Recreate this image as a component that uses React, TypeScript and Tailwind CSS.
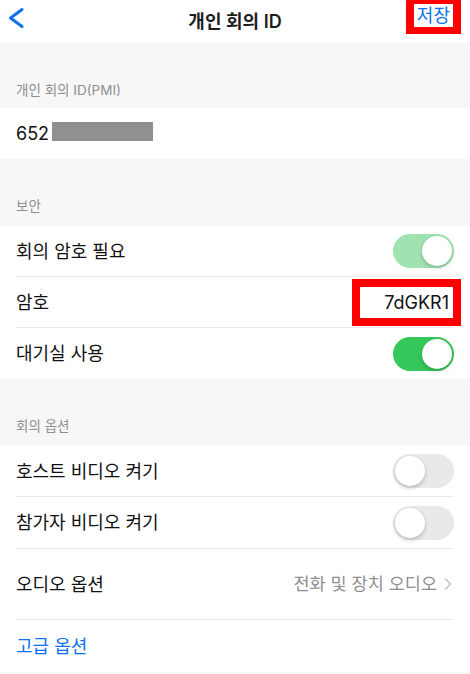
import { ChevronRight } from "lucide-react";

function Toggle({ on, dim }: { on: boolean; dim?: boolean }) {
  if (on) {
    return (
      <div
        className={`w-[61px] h-[34px] rounded-full flex items-center justify-end pr-[2px] ${
          dim ? "bg-[#a0e2b0]" : "bg-[#36c75a]"
        }`}
      >
        <div className="w-[30px] h-[30px] rounded-full bg-white shadow-[0_2px_4px_rgba(0,0,0,0.2)]" />
      </div>
    );
  }
  return (
    <div className="w-[61px] h-[34px] rounded-full bg-[#e9e9eb] flex items-center pl-[2px]">
      <div className="w-[30px] h-[30px] rounded-full bg-white shadow-[0_2px_4px_rgba(0,0,0,0.22)]" />
    </div>
  );
}

function SectionLabel({ children }: { children: string }) {
  return (
    <div className="h-[67px] flex items-end pb-[10px] px-4 text-[13.5px] text-[#8e8e93]">{children}</div>
  );
}

function Row({
  label,
  right,
  divider = true,
  h = "h-[51px]",
}: {
  label: string;
  right?: React.ReactNode;
  divider?: boolean;
  h?: string;
}) {
  return (
    <div className="bg-white px-4">
      <div className={`flex items-center justify-between ${h} ${divider ? "border-b border-[#ececec]" : ""}`}>
        <span className="text-[18px] text-[#111]">{label}</span>
        {right}
      </div>
    </div>
  );
}

export default function App() {
  return (
    <div
      className="w-[470px] h-[674px] bg-[#f7f7f7] overflow-hidden"
      style={{ fontFamily: 'Inter, "Noto Sans CJK KR", "Noto Sans", sans-serif' }}
    >
      {/* header */}
      <div className="h-[43px] bg-white flex items-start justify-between">
        <div className="w-[70px]">
          <svg width="30" height="36" viewBox="0 0 30 36" fill="none">
            <polyline
              points="22,9.5 10.5,18 22,26.5"
              stroke="#0e72ed"
              strokeWidth="3"
              strokeLinecap="round"
              strokeLinejoin="round"
            />
          </svg>
        </div>
        <span className="mt-[8px] text-[18px] font-semibold text-[#1d1d1f]">개인 회의 ID</span>
        <div className="w-[70px] flex justify-end pr-[9px]">
          <div className="border-[#ff0000] border-x-[8px] border-t-[4px] border-b-[7px] bg-white px-[3px] h-[34px] flex items-center">
            <span className="text-[18px] text-[#0e72ed] leading-none">저장</span>
          </div>
        </div>
      </div>

      <div className="h-[65px] flex items-end pb-[8px] px-4 text-[13.5px] text-[#8e8e93]">개인 회의 ID(PMI)</div>
      <div className="bg-white h-[51px] px-4 flex items-center">
        <span className="relative text-[18px] leading-[22px] text-[#111]">
          652 000 0000
          <span className="absolute left-[36px] top-[-1px] w-[101px] h-[19px] bg-[#909090]" />
        </span>
      </div>

      <SectionLabel>보안</SectionLabel>
      <Row label="회의 암호 필요" right={<Toggle on dim />} />
      <div className="bg-white px-4">
        <div className="h-[51px] flex items-center justify-between border-b border-[#ececec]">
          <span className="text-[18px] text-[#111]">암호</span>
          <div className="border-[8px] border-[#ff0000] h-[47px] w-[109px] -mr-[7px] flex items-center justify-end pr-[4px]">
            <span className="text-[18px] text-[#111]">7dGKR1</span>
          </div>
        </div>
      </div>
      <Row label="대기실 사용" right={<Toggle on />} divider={false} />

      <SectionLabel>회의 옵션</SectionLabel>
      <Row label="호스트 비디오 켜기" right={<Toggle on={false} />} />
      <Row label="참가자 비디오 켜기" h="h-[52px]" right={<Toggle on={false} />} />
      <Row
        label="오디오 옵션"
        h="h-[71px]"
        right={
          <span className="flex items-center text-[17.5px] text-[#8e8e93]">
            전화 및 장치 오디오
            <ChevronRight className="w-[20px] h-[20px] ml-[1px] -mr-[4px] text-[#c4c4c7]" />
          </span>
        }
      />
      <div className="bg-white px-4 h-[52px] flex items-center">
        <span className="text-[18px] text-[#0e72ed]">고급 옵션</span>
      </div>
    </div>
  );
}
